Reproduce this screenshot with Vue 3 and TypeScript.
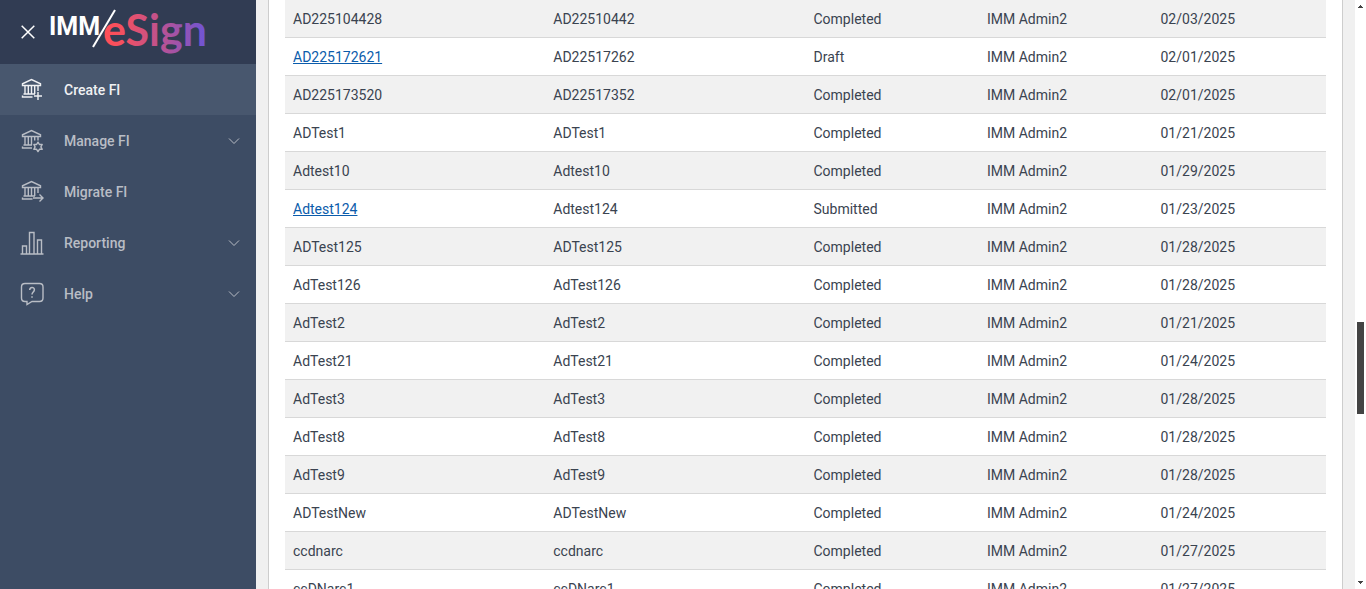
<script setup lang="ts">
interface NavItem {
  label: string
  icon: 'create' | 'manage' | 'migrate' | 'reporting' | 'help'
  active?: boolean
  expandable?: boolean
}

interface Row {
  name: string
  id: string
  status: string
  date: string
  link?: boolean
}

const navItems: NavItem[] = [
  { label: 'Create FI', icon: 'create', active: true },
  { label: 'Manage FI', icon: 'manage', expandable: true },
  { label: 'Migrate FI', icon: 'migrate' },
  { label: 'Reporting', icon: 'reporting', expandable: true },
  { label: 'Help', icon: 'help', expandable: true },
]

const owner = 'IMM Admin2'

const rows: Row[] = [
  { name: 'AD225104428', id: 'AD22510442', status: 'Completed', date: '02/03/2025' },
  { name: 'AD225172621', id: 'AD22517262', status: 'Draft', date: '02/01/2025', link: true },
  { name: 'AD225173520', id: 'AD22517352', status: 'Completed', date: '02/01/2025' },
  { name: 'ADTest1', id: 'ADTest1', status: 'Completed', date: '01/21/2025' },
  { name: 'Adtest10', id: 'Adtest10', status: 'Completed', date: '01/29/2025' },
  { name: 'Adtest124', id: 'Adtest124', status: 'Submitted', date: '01/23/2025', link: true },
  { name: 'ADTest125', id: 'ADTest125', status: 'Completed', date: '01/28/2025' },
  { name: 'AdTest126', id: 'AdTest126', status: 'Completed', date: '01/28/2025' },
  { name: 'AdTest2', id: 'AdTest2', status: 'Completed', date: '01/21/2025' },
  { name: 'AdTest21', id: 'AdTest21', status: 'Completed', date: '01/24/2025' },
  { name: 'AdTest3', id: 'AdTest3', status: 'Completed', date: '01/28/2025' },
  { name: 'AdTest8', id: 'AdTest8', status: 'Completed', date: '01/28/2025' },
  { name: 'AdTest9', id: 'AdTest9', status: 'Completed', date: '01/28/2025' },
  { name: 'ADTestNew', id: 'ADTestNew', status: 'Completed', date: '01/24/2025' },
  { name: 'ccdnarc', id: 'ccdnarc', status: 'Completed', date: '01/27/2025' },
  { name: 'ccDNarc1', id: 'ccDNarc1', status: 'Completed', date: '01/27/2025' },
]
</script>

<template>
  <div class="app">
    <aside class="sidebar">
      <header class="brand">
        <button class="close" type="button" aria-label="Close menu">
          <svg width="14" height="14" viewBox="0 0 14 14"><path d="M0.7 0.7 13.3 13.3M13.3 0.7 0.7 13.3" /></svg>
        </button>
        <svg class="logo" width="160" height="50" viewBox="0 0 160 50" role="img" aria-label="IMM eSign">
          <defs>
            <linearGradient id="brand-gradient" gradientUnits="userSpaceOnUse" x1="56" y1="0" x2="158" y2="0">
              <stop offset="0" stop-color="#ff4f58" />
              <stop offset="0.15" stop-color="#f5505f" />
              <stop offset="0.5" stop-color="#c2528c" />
              <stop offset="1" stop-color="#6a55d8" />
            </linearGradient>
          </defs>
          <text class="imm" x="-1" y="28">IMM</text>
          <path class="slash" d="M65 3 43 40" />
          <text class="esign" x="53" y="39" fill="url(#brand-gradient)">eSign</text>
        </svg>
      </header>
      <nav>
        <a v-for="item in navItems" :key="item.label" href="#" class="item" :class="{ active: item.active }">
          <svg class="icon" width="24" height="24" viewBox="0 0 24 24">
            <g v-if="item.icon === 'reporting'">
              <path d="M0.500 23H23.500M2.500 22.500V15H6.500V22.500M9.500 22.500V1.500H14V22.500M17.500 22.500V9H21.500V22.500" />
            </g>
            <g v-else-if="item.icon === 'help'">
              <path d="M5 1.500H19.500Q23 1.500 23 5V16Q23 19.500 19.500 19.500H12L7 22.500V19.500H5Q1.500 19.500 1.500 16V5Q1.500 1.500 5 1.500Z" />
              <path class="question" d="M9.700 8C9.700 4.600 14.400 4.600 14.400 7.700C14.400 10 12 10 12 12.500M12 14.200V15.800" />
            </g>
            <g v-else>
              <path d="M2.500 7.500V5.800L11.500 1.600 20.500 5.800V7.500ZM5 7.500V16M8.300 7.500V16M11.500 7.500V16" />
              <path v-if="item.icon === 'manage'" d="M14.700 7.500V11.500M18 7.500V11.500M3.500 16H12M2.500 19.700V17.500M2.500 19H12" />
              <path v-else d="M14.700 7.500V16M18 7.500V13M3.500 16H15M2.500 19.700V17.500M2.500 19H12.500" />
              <path v-if="item.icon === 'create'" d="M18 14V22M14 18H22" />
              <path v-if="item.icon === 'migrate'" d="M13 18H23M19.500 14.500 23 18 19.500 21.500" />
              <path
                v-if="item.icon === 'manage'"
                class="gear"
                d="M18 13.200 19.400 15.500 22.200 15.500 20.900 17.900 22.200 20.300 19.400 20.300 18 22.600 16.600 20.300 13.800 20.300 15.100 17.900 13.800 15.500 16.600 15.500Z"
              />
            </g>
          </svg>
          <span class="label">{{ item.label }}</span>
          <svg v-if="item.expandable" class="chevron" width="12" height="8" viewBox="0 0 12 8"><path d="M1 1.500 6 6.500 11 1.500" /></svg>
        </a>
      </nav>
    </aside>

    <main class="content">
      <section class="panel">
        <table>
          <colgroup>
            <col class="wide" /><col class="wide" /><col /><col /><col />
          </colgroup>
          <tbody>
            <tr v-for="row in rows" :key="row.name">
              <td><a v-if="row.link" href="#">{{ row.name }}</a><template v-else>{{ row.name }}</template></td>
              <td>{{ row.id }}</td>
              <td>{{ row.status }}</td>
              <td>{{ owner }}</td>
              <td>{{ row.date }}</td>
            </tr>
          </tbody>
        </table>
      </section>
    </main>

    <div class="scrollbar" aria-hidden="true">
      <svg width="5" height="3" viewBox="0 0 5 3"><path d="M2 0h1v1h1v1h1v1H0V2h1V1h1z" /></svg>
      <div class="track"><div class="thumb"></div></div>
      <svg width="5" height="3" viewBox="0 0 5 3"><path d="M0 0h5v1H4v1H3v1H2V2H1V1H0z" /></svg>
    </div>
  </div>
</template>

<style>
body {
  margin: 0;
}
</style>

<style scoped>
.app {
  display: flex;
  height: 100vh;
  overflow: hidden;
  background: #f0f0f0;
  color: #3a4350;
  font-family: Roboto, "Liberation Sans", sans-serif;
  font-size: 14px;
}

.sidebar {
  flex: 0 0 256px;
  background: #3d4c64;
}

.brand {
  display: flex;
  align-items: center;
  box-sizing: border-box;
  height: 64px;
  padding-left: 21px;
  background: #313c53;
}

.close {
  display: flex;
  margin: 0 15px 0 0;
  padding: 0;
  border: 0;
  background: none;
}

.close path {
  fill: none;
  stroke: #fff;
  stroke-width: 1.5;
}

.logo {
  overflow: visible;
}

.imm {
  fill: #fff;
  font: 700 25px Roboto, sans-serif;
}

.esign {
  font: 700 43px Lato, sans-serif;
}

.slash {
  fill: none;
  stroke: #fff;
  stroke-width: 2;
}

.item {
  display: flex;
  align-items: center;
  box-sizing: border-box;
  height: 51px;
  padding: 0 16px 0 20px;
  color: #b9bdc5;
  font-weight: 500;
  text-decoration: none;
}

.item.active {
  background: #48576e;
  color: #f0f1f3;
}

.icon {
  margin-right: 20px;
  fill: none;
  stroke: currentColor;
  stroke-width: 1.4;
}

.question {
  stroke-width: 1.5;
}

.gear {
  stroke-linejoin: round;
}

.label {
  flex: 1;
}

.chevron {
  fill: none;
  stroke: currentColor;
  stroke-width: 1;
}

.content {
  flex: 1;
  min-width: 0;
  padding: 0 12px;
}

.panel {
  padding: 0 16px;
  border: solid #cdcdcd;
  border-width: 0 1px;
  background: #fff;
}

table {
  width: 100%;
  table-layout: fixed;
  border-collapse: separate;
  border-spacing: 0;
}

.wide {
  width: 25%;
}

td {
  box-sizing: border-box;
  height: 38px;
  padding: 0 8px;
  border-bottom: 1px solid #d8d8d8;
}

tr:nth-child(odd) {
  background: #f1f1f1;
}

td a {
  color: #0b5cab;
}

.scrollbar {
  display: flex;
  flex: 0 0 11px;
  flex-direction: column;
  align-items: center;
  box-sizing: border-box;
  padding: 5px 0;
  background: #fff;
}

.scrollbar svg {
  flex: none;
  fill: #444;
}

.track {
  display: grid;
  flex: 1;
  grid-template-rows: 314fr 92fr 167fr;
}

.thumb {
  grid-row: 2;
  width: 7px;
  background: #444;
}
</style>
